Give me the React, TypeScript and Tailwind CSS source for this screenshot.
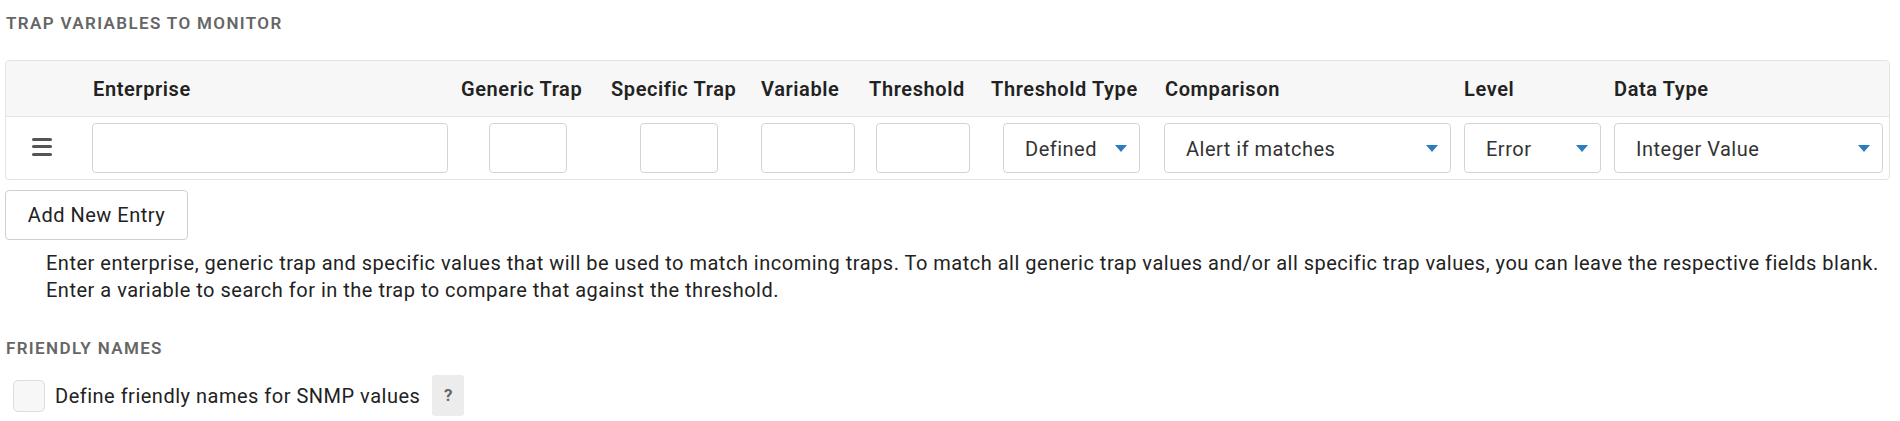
import React, { useState } from 'react';

const font = { fontFamily: 'Roboto, "Liberation Sans", sans-serif' };

function Caret() {
  return (
    <svg width="12" height="7" viewBox="0 0 12 7" className="shrink-0">
      <path d="M0 0 L12 0 L6 7 Z" fill="#2d7bc0" />
    </svg>
  );
}

function Select({ value, width, margin }: { value: string; width: string; margin: string }) {
  return (
    <div
      className={`flex h-[50px] items-center justify-between rounded-[4px] border border-[#d3d3d3] bg-white pl-[21px] pr-[12px] pt-[1px] text-[20px] tracking-[0.5px] text-[#333] ${width} ${margin}`}
    >
      <span>{value}</span>
      <Caret />
    </div>
  );
}

function TextBox({ width, margin }: { width: string; margin: string }) {
  return <input className={`h-[50px] rounded-[4px] border border-[#d3d3d3] bg-white outline-none ${width} ${margin}`} />;
}

export default function App() {
  const [friendly, setFriendly] = useState(false);

  const cols = 'grid grid-cols-[80px_370px_145px_150px_110px_120px_175px_300px_150px_283px]';

  return (
    <div className="w-[1900px] bg-white pb-[4px] text-[#222]" style={font}>
      <h2 className="ml-[6px] mt-[13px] text-[17px] font-semibold uppercase leading-[20px] tracking-[0.08em] text-[#666]">
        Trap Variables to Monitor
      </h2>

      <div className="ml-[5px] mt-[27px] w-[1885px] overflow-hidden rounded-[4px] border border-[#e3e3e3]">
        <div className={`${cols} h-[56px] items-center border-b border-[#e3e3e3] bg-[#f7f7f7] text-[20px] font-semibold tracking-[0.6px] text-[#222]`}>
          <div />
          <div className="pl-[7px]">Enterprise</div>
          <div className="pl-[5px]">Generic Trap</div>
          <div className="pl-[10px]">Specific Trap</div>
          <div className="pl-[10px]">Variable</div>
          <div className="pl-[8px]">Threshold</div>
          <div className="pl-[10px]">Threshold Type</div>
          <div className="pl-[9px]">Comparison</div>
          <div className="pl-[8px]">Level</div>
          <div className="pl-[8px]">Data Type</div>
        </div>
        <div className={`${cols} h-[62px] items-center`}>
          <div className="flex flex-col items-center gap-[4.5px] pr-[8px] pb-[3px]">
            <span className="block h-[3px] w-[20px] rounded-full bg-[#555]" />
            <span className="block h-[3px] w-[20px] rounded-full bg-[#555]" />
            <span className="block h-[3px] w-[20px] rounded-full bg-[#555]" />
          </div>
          <TextBox width="w-[356px]" margin="ml-[6px]" />
          <TextBox width="w-[78px]" margin="ml-[33px]" />
          <TextBox width="w-[78px]" margin="ml-[39px]" />
          <TextBox width="w-[94px]" margin="ml-[10px]" />
          <TextBox width="w-[94px]" margin="ml-[15px]" />
          <Select value="Defined" width="w-[137px]" margin="ml-[22px]" />
          <Select value="Alert if matches" width="w-[287px]" margin="ml-[8px]" />
          <Select value="Error" width="w-[137px]" margin="ml-[8px]" />
          <Select value="Integer Value" width="w-[269px]" margin="ml-[8px]" />
        </div>
      </div>

      <button className="ml-[5px] mt-[10px] h-[50px] w-[183px] rounded-[4px] border border-[#cfcfcf] bg-white text-[20px] tracking-[0.5px] text-[#222]">
        Add New Entry
      </button>

      <p className="ml-[46px] mt-[10px] text-[20px] leading-[27px] tracking-[0.5px] text-[#222]">
        Enter enterprise, generic trap and specific values that will be used to match incoming traps. To match all generic trap values and/or all specific trap values, you can leave the respective fields blank.
        <br />
        Enter a variable to search for in the trap to compare that against the threshold.
      </p>

      <h2 className="ml-[6px] mt-[34px] text-[17px] font-semibold uppercase leading-[20px] tracking-[0.08em] text-[#666]">
        Friendly Names
      </h2>

      <div className="ml-[13px] mt-[17px] flex h-[41px] items-center">
        <button
          onClick={() => setFriendly(!friendly)}
          className="h-[32px] w-[32px] rounded-[5px] border border-[#dcdcdc] bg-[#f7f7f7]"
        />
        <span className="ml-[10px] text-[20px] tracking-[0.5px] text-[#222]">Define friendly names for SNMP values</span>
        <span className="ml-[12px] flex h-[41px] w-[32px] items-center justify-center rounded-[3px] bg-[#ececec] text-[17px] font-bold text-[#666]">
          ?
        </span>
      </div>
    </div>
  );
}
